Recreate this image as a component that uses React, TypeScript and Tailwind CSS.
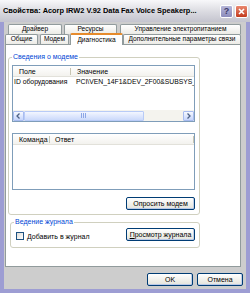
import React from "react";

const F = "font-['Liberation_Sans',Arial,sans-serif]";

function Tab({ w, label, active, className = "" }: { w: string; label: string; active?: boolean; className?: string }) {
  return (
    <div
      className={`${w} ${className} flex items-center justify-center border border-b-0 border-[#919b9c] rounded-t-[2px] text-[6.6px] leading-none text-black whitespace-nowrap overflow-hidden ${
        active ? "bg-white border-t-[2px] border-t-[#e68b2c]" : "bg-gradient-to-b from-white to-[#ecebe6]"
      }`}
    >
      {label}
    </div>
  );
}

function XPButton({ label, w }: { label: React.ReactNode; w: string }) {
  return (
    <div
      className={`${w} h-[13px] rounded-[2px] border border-[#003c74] bg-gradient-to-b from-white to-[#e3e3db] shadow-[inset_0_-1px_0_#b9c9e8,inset_-1px_0_0_#c0cfe8] flex items-center justify-center text-[7px] leading-none text-black`}
    >
      {label}
    </div>
  );
}

function ScrollBtn({ dir }: { dir: "l" | "r" }) {
  return (
    <div className="w-[11px] h-[10px] rounded-[1px] border border-[#a8bcf0] bg-gradient-to-b from-[#f6f9ff] to-[#c6d5fb] flex items-center justify-center">
      <svg width="5" height="6" viewBox="0 0 5 6">
        {dir === "l" ? (
          <path d="M3.5 0.5 L1 3 L3.5 5.5" stroke="#4d6185" strokeWidth="1.3" fill="none" />
        ) : (
          <path d="M1.5 0.5 L4 3 L1.5 5.5" stroke="#4d6185" strokeWidth="1.3" fill="none" />
        )}
      </svg>
    </div>
  );
}

export default function App() {
  return (
    <div className={`${F} w-[250px] h-[293px] bg-[#9d9dd3] flex flex-col overflow-hidden`}>
      {/* Title bar */}
      <div className="h-[22px] shrink-0 bg-gradient-to-b from-[#f8f8fa] via-[#dcdce2] to-[#c4c4ce] flex items-center pl-[3px] pr-[2px]">
        <div className="flex-1 text-[7.4px] font-bold text-black whitespace-nowrap overflow-hidden leading-none">
          Свойства: Acorp IRW2 V.92 Data Fax Voice Speakerp...
        </div>
        <div className="w-[13px] h-[13px] rounded-[2px] border border-white bg-gradient-to-b from-[#b6b6d8] to-[#8c8cbc] flex items-center justify-center text-[9px] font-bold text-[#3a3a6a] leading-none mr-[2px]">
          ?
        </div>
        <div className="w-[13px] h-[13px] rounded-[2px] border border-white bg-gradient-to-b from-[#e9876e] to-[#c2391b] flex items-center justify-center">
          <svg width="7" height="7" viewBox="0 0 7 7">
            <path d="M1 1 L6 6 M6 1 L1 6" stroke="white" strokeWidth="1.6" />
          </svg>
        </div>
      </div>

      {/* Body */}
      <div className="flex-1 mx-[4px] mb-[4px] bg-[#cdcdcd] flex flex-col">
        {/* Tabs */}
        <div className="pt-[2px] flex flex-col">
          <div className="flex h-[10px]">
            <Tab w="w-[54px]" className="ml-[4px]" label="Драйвер" />
            <Tab w="w-[53px]" className="ml-[2px]" label="Ресурсы" />
            <Tab w="w-[121px]" className="ml-[3px]" label="Управление электропитанием" />
          </div>
          <div className="flex h-[10px] items-end">
            <Tab w="w-[33px]" className="ml-[1px] h-[10px]" label="Общие" />
            <Tab w="w-[29px]" className="ml-[2px] h-[10px]" label="Модем" />
            <Tab w="w-[53px]" className="ml-[1px] h-[12px] -mb-[1px] relative z-10" label="Диагностика" active />
            <Tab w="w-[118px]" className="h-[10px]" label="Дополнительные параметры связи" />
          </div>
        </div>

        {/* Panel */}
        <div className="ml-[1px] w-[236px] h-[223px] bg-white border border-[#919b9c] flex flex-col">
          {/* Group 1 */}
          <div className="relative ml-[2px] mt-[12px] w-[192px] h-[158px] border border-[#d0d0bf] rounded-[3px] flex flex-col px-[3px] pt-[7px]">
            <span className="absolute -top-[5px] left-[3px] bg-white px-[1px] text-[7px] leading-none text-[#0046d5]">
              Сведения о модеме
            </span>
            {/* List 1 */}
            <div className="w-[183px] h-[57px] border border-[#7f9db9] bg-white flex flex-col">
              <div className="h-[11px] flex items-center text-[7px] leading-none text-black border-b border-[#e2e1da] bg-gradient-to-b from-white to-[#f3f2ee]">
                <div className="w-[58px] pl-[6px] border-r border-[#c7c5b2] h-[7px] flex items-center">Поле</div>
                <div className="pl-[6px]">Значение</div>
              </div>
              <div className="h-[11px] flex items-center text-[6.8px] leading-none text-black whitespace-nowrap overflow-hidden">
                <div className="w-[59px] pl-[1px] shrink-0">ID оборудования</div>
                <div className="pl-[4px]">PCI\VEN_14F1&amp;DEV_2F00&amp;SUBSYS_2</div>
              </div>
              <div className="flex-1" />
              <div className="h-[11px] flex items-center bg-[#f4f3ee]">
                <ScrollBtn dir="l" />
                <div className="w-[120px] h-[10px] rounded-[1px] border border-[#b8cbf7] bg-gradient-to-b from-[#f3f6ff] to-[#cbd9fb] flex items-center justify-center">
                  <svg width="6" height="5" viewBox="0 0 6 5">
                    <path d="M0.5 0 V5 M2.5 0 V5 M4.5 0 V5" stroke="#8ca6e6" strokeWidth="1" />
                  </svg>
                </div>
                <div className="flex-1" />
                <ScrollBtn dir="r" />
              </div>
            </div>
            {/* List 2 */}
            <div className="mt-[11px] w-[183px] h-[57px] border border-[#7f9db9] bg-white flex flex-col">
              <div className="h-[11px] flex items-center text-[7px] leading-none text-black border-b border-[#e2e1da] bg-gradient-to-b from-white to-[#f3f2ee]">
                <div className="w-[37px] pl-[6px] border-r border-[#c7c5b2] h-[7px] flex items-center">Команда</div>
                <div className="pl-[5px] flex-1">Ответ</div>
                <div className="border-r border-[#c7c5b2] h-[7px]" />
              </div>
            </div>
            <div className="mt-[7px] flex justify-end pr-[1px]">
              <XPButton w="w-[69px]" label="Опросить модем" />
            </div>
          </div>

          {/* Group 2 */}
          <div className="relative ml-[4px] mt-[7px] w-[190px] h-[26px] border border-[#d0d0bf] rounded-[3px] flex items-center pl-[5px] pr-[4px]">
            <span className="absolute -top-[5px] left-[3px] bg-white px-[1px] text-[7px] leading-none text-[#0046d5]">
              Ведение журнала
            </span>
            <div className="w-[8px] h-[8px] border border-[#1c5180] bg-gradient-to-br from-[#dcdcd7] to-white mt-[2px]" />
            <div className="ml-[3px] text-[7px] leading-none text-black mt-[2px]">
              <span className="underline">Д</span>обавить в журнал
            </div>
            <div className="flex-1" />
            <div className="mt-[-2px]">
              <XPButton
                w="w-[69px]"
                label={
                  <>
                    <span className="underline">П</span>росмотр журнала
                  </>
                }
              />
            </div>
          </div>
        </div>

        {/* Bottom buttons */}
        <div className="flex justify-end pr-[3px] mt-[6px]">
          <XPButton w="w-[46px]" label="OK" />
          <div className="w-[4px]" />
          <XPButton w="w-[46px]" label="Отмена" />
        </div>
      </div>
    </div>
  );
}
